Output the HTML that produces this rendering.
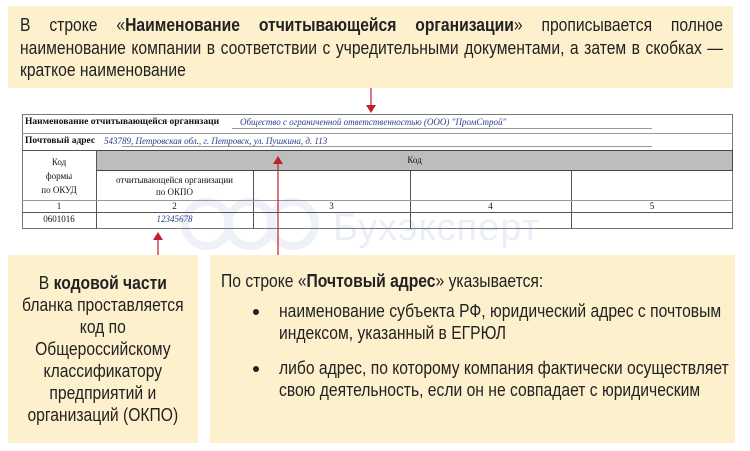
<!DOCTYPE html>
<html><head><meta charset="utf-8"><style>
*{margin:0;padding:0;box-sizing:border-box}
body{width:750px;height:451px;background:#fff;position:relative;overflow:hidden;font-family:"Liberation Sans",sans-serif;color:#222}
.box{position:absolute;background:#fdf0cc}
.n{position:absolute;font-size:18px;line-height:22px;transform:scaleX(0.87);transform-origin:0 0;white-space:nowrap}
.j{text-align:justify;text-align-last:justify}
.t{position:absolute;font-family:"Liberation Serif",serif;font-size:9px;color:#111}
.ln{position:absolute;background:#555}
.b{font-weight:bold}
.blue{color:#2c3e8c;font-style:italic}
.dot{position:absolute;width:6px;height:6px;border-radius:50%;background:#222}
</style></head><body>
<div class="box" style="left:8px;top:6px;width:725px;height:82px"></div>
<div class="n j" style="left:20px;top:14px;width:808px">В строке «<span class="b">Наименование отчитывающейся организации</span>» прописывается полное</div>
<div class="n j" style="left:20px;top:37px;width:808px">наименование компании в соответствии с учредительными документами, а затем в скобках —</div>
<div class="n" style="left:20px;top:59px;width:808px">краткое наименование</div>

<!-- watermark -->
<svg style="position:absolute;left:175px;top:188px" width="150" height="70"><g fill="none" stroke="#eef2f8" stroke-width="8"><circle cx="32" cy="36" r="22"/><circle cx="75" cy="36" r="22"/><circle cx="118" cy="36" r="22"/></g></svg>
<div style="position:absolute;left:333px;top:207px;font-size:38px;color:#eaeff7;letter-spacing:1px">Бухэксперт</div>

<!-- table -->
<div style="position:absolute;left:22px;top:114px;width:711px;height:115px;border:1px solid #777"></div>
<div class="ln" style="left:22px;top:133px;width:711px;height:1px;background:#999"></div>
<div class="ln" style="left:22px;top:150px;width:711px;height:1px"></div>
<div style="position:absolute;left:96px;top:150px;width:637px;height:21px;background:#bdbdbd;border:1px solid #444"></div>
<div class="ln" style="left:96px;top:150px;width:1px;height:79px"></div>
<div class="ln" style="left:253px;top:171px;width:1px;height:58px"></div>
<div class="ln" style="left:410px;top:171px;width:1px;height:58px"></div>
<div class="ln" style="left:571px;top:171px;width:1px;height:58px"></div>
<div class="ln" style="left:22px;top:200px;width:711px;height:1px;background:#999"></div>
<div class="ln" style="left:22px;top:212px;width:711px;height:1px"></div>
<div class="ln" style="left:232px;top:128px;width:420px;height:1px;background:#999"></div>
<div class="ln" style="left:122px;top:146px;width:530px;height:1px;background:#999"></div>
<div class="t b" style="left:25px;top:117px;font-size:9.5px">Наименование отчитывающейся организаци</div>
<div class="t blue" style="left:240px;top:117px">Общество с ограниченной ответственностью (ООО) "ПромСтрой"</div>
<div class="t b" style="left:25px;top:136px;font-size:9.5px">Почтовый адрес</div>
<div class="t blue" style="left:104px;top:136px">543789, Петровская обл., г. Петровск, ул. Пушкина, д. 113</div>
<div class="t" style="left:22px;top:155px;width:74px;text-align:center;line-height:14px">Код<br>формы<br>по ОКУД</div>
<div class="t" style="left:96px;top:155px;width:637px;text-align:center">Код</div>
<div class="t" style="left:96px;top:174px;width:157px;text-align:center;line-height:12px">отчитывающейся организации<br>по ОКПО</div>
<div class="t" style="left:22px;top:201px;width:74px;text-align:center">1</div>
<div class="t" style="left:96px;top:201px;width:157px;text-align:center">2</div>
<div class="t" style="left:253px;top:201px;width:157px;text-align:center">3</div>
<div class="t" style="left:410px;top:201px;width:161px;text-align:center">4</div>
<div class="t" style="left:571px;top:201px;width:162px;text-align:center">5</div>
<div class="t" style="left:22px;top:214px;width:74px;text-align:center">0601016</div>
<div class="t blue" style="left:96px;top:214px;width:157px;text-align:center">12345678</div>

<!-- arrows -->
<svg style="position:absolute;left:0;top:0" width="750" height="451"><g fill="#c0212b" stroke="#c0212b">
<line x1="371" y1="88" x2="371" y2="106" stroke-width="1.2"/><path d="M366 105 L376 105 L371 113Z" stroke="none"/>
<line x1="278" y1="162" x2="278" y2="258" stroke-width="1.2"/><path d="M273 164 L283 164 L278 156Z" stroke="none"/>
<line x1="158" y1="238" x2="158" y2="256" stroke-width="1.2"/><path d="M153 240 L163 240 L158 232Z" stroke="none"/>
</g></svg>

<div class="box" style="left:8px;top:255px;width:190px;height:188px"></div>
<div class="n" style="left:8px;top:272px;width:218px;text-align:center">В <span class="b">кодовой части</span><br>бланка проставляется<br>код по<br>Общероссийскому<br>классификатору<br>предприятий и<br>организаций (ОКПО)</div>
<div class="box" style="left:210px;top:255px;width:525px;height:188px"></div>
<div class="n" style="left:221px;top:270px;width:560px">По строке «<span class="b">Почтовый адрес</span>» указывается:</div>
<div class="dot" style="left:253px;top:309px"></div>
<div class="n" style="left:279px;top:300px;width:515px">наименование субъекта РФ, юридический адрес с почтовым<br>индексом, указанный в ЕГРЮЛ</div>
<div class="dot" style="left:253px;top:366px"></div>
<div class="n" style="left:279px;top:357px;width:515px">либо адрес, по которому компания фактически осуществляет<br>свою деятельность, если он не совпадает с юридическим</div>
</body></html>
